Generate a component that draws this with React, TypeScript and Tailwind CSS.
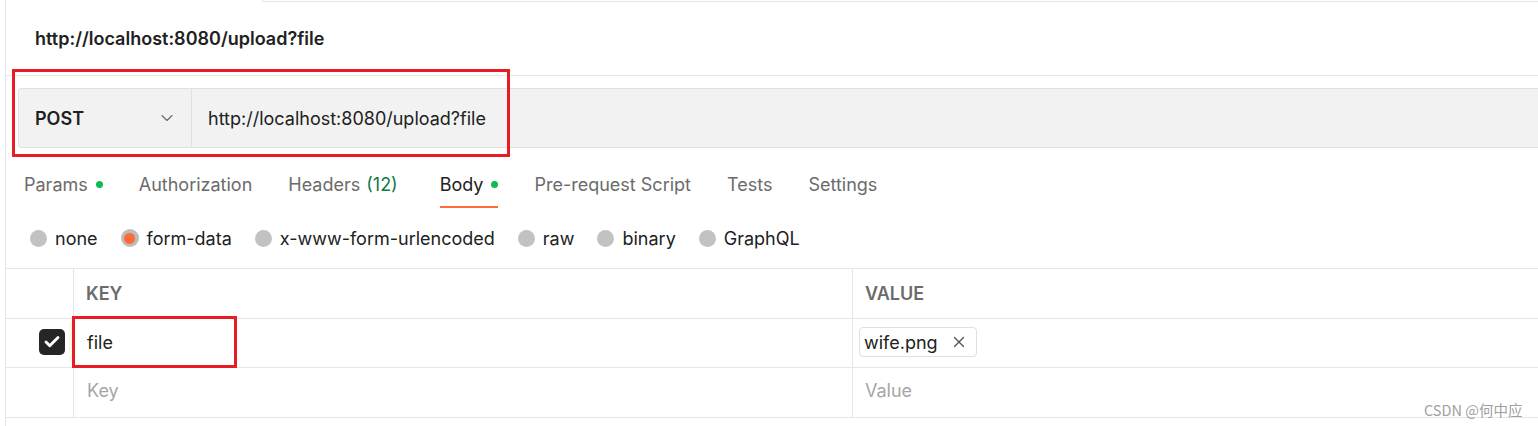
import { Check, ChevronDown, X } from "lucide-react";

const tabs = [
  { label: "Params", dot: true },
  { label: "Authorization" },
  { label: "Headers", count: "(12)" },
  { label: "Body", dot: true, active: true },
  { label: "Pre-request Script" },
  { label: "Tests" },
  { label: "Settings" },
];

const bodyTypes = ["none", "form-data", "x-www-form-urlencoded", "raw", "binary", "GraphQL"];

const App = () => {
  return (
    <div className="relative h-[426px] w-[1538px] overflow-hidden bg-white font-['Inter',sans-serif] text-[#212121]">
      <div className="ml-[5px] flex h-full flex-col border-l border-[#e6e6e6]">
        {/* tab strip edge */}
        <div className="flex h-[2px]">
          <div className="w-[256px]" />
          <div className="flex-1 border-b border-l border-[#e6e6e6]" />
        </div>

        {/* request title */}
        <div className="flex h-[74px] items-center border-b border-[#e6e6e6] pl-[29px]">
          <h1 className="text-[18px] font-semibold">http://localhost:8080/upload?file</h1>
        </div>

        {/* url bar */}
        <div className="ml-[12px] mt-[12px] flex h-[60px] rounded-l-[4px] border border-r-0 border-[#e0e0e0] bg-[#f2f2f2]">
          <div className="flex w-[173px] items-center justify-between border-r border-[#e0e0e0] pl-[16px] pr-[14px]">
            <span className="text-[18px] font-semibold">POST</span>
            <ChevronDown size={20} strokeWidth={1.4} className="text-[#6b6b6b]" />
          </div>
          <div className="flex items-center pl-[16px] text-[18px]">http://localhost:8080/upload?file</div>
        </div>

        {/* request tabs */}
        <div className="mt-[12px] flex h-[48px] gap-[36px] pl-[18px]">
          {tabs.map((t) => (
            <div
              key={t.label}
              className={
                t.active
                  ? "ml-[6px] flex items-center gap-[8px] border-b-2 border-[#ff6c37] pt-[2px] text-[18px] text-[#212121]"
                  : "flex items-center gap-[8px] border-b-2 border-transparent pt-[2px] text-[18px] text-[#6b6b6b]"
              }
            >
              <span>
                {t.label}
                {t.count && <span className="ml-[6px] text-[#0f7a45]">{t.count}</span>}
              </span>
              {t.dot && <span className="h-[7px] w-[7px] rounded-full bg-[#0cbb52]" />}
            </div>
          ))}
        </div>

        {/* body type radios */}
        <div className="mt-[10px] flex h-[40px] items-center gap-[23px] pl-[24px]">
          {bodyTypes.map((b) => (
            <label key={b} className="flex items-center gap-[8px] text-[18px]">
              {b === "form-data" ? (
                <span className="flex h-[18px] w-[18px] items-center justify-center rounded-full bg-[#bdbdbd]">
                  <span className="h-[11px] w-[11px] rounded-full bg-[#ff6c37]" />
                </span>
              ) : (
                <span className="h-[17px] w-[17px] rounded-full bg-[#c2c2c2]" />
              )}
              {b}
            </label>
          ))}
        </div>

        {/* form-data table */}
        <div className="mt-[10px] border-t border-[#e6e6e6]">
          <div className="flex h-[50px] border-b border-[#e6e6e6]">
            <div className="w-[68px] border-r border-[#e6e6e6]" />
            <div className="flex w-[779px] items-center border-r border-[#e6e6e6] pl-[12px] text-[18px] font-semibold text-[#6b6b6b]">
              KEY
            </div>
            <div className="flex flex-1 items-center pl-[12px] text-[18px] font-semibold text-[#6b6b6b]">VALUE</div>
          </div>
          <div className="flex h-[49px] border-b border-[#e6e6e6]">
            <div className="flex w-[68px] items-center justify-end border-r border-[#e6e6e6] pb-[2px]">
              <span className="flex h-[26px] w-[26px] items-center justify-center rounded-[5px] bg-[#262626]">
                <Check size={18} strokeWidth={3.8} className="text-white" />
              </span>
              <span className="my-[2px] ml-[4px] w-[4px] self-stretch bg-[#fdf8e6]" />
            </div>
            <div className="flex w-[779px] items-center border-r border-[#e6e6e6] pb-[2px] pl-[13px] text-[18px]">file</div>
            <div className="flex flex-1 items-center pb-[2px] pl-[6px]">
              <span className="flex h-[30px] items-center gap-[12px] rounded-[4px] border border-[#e0e0e0] pl-[4px] pr-[8px] text-[18px]">
                wife.png
                <X size={18} strokeWidth={1.8} className="text-[#555]" />
              </span>
            </div>
          </div>
          <div className="flex h-[50px] border-b border-[#e6e6e6]">
            <div className="w-[68px] border-r border-[#e6e6e6]" />
            <div className="flex w-[779px] items-center border-r border-[#e6e6e6] pb-[4px] pl-[13px] text-[18px] text-[#a6a6a6]">
              Key
            </div>
            <div className="flex flex-1 items-center pb-[4px] pl-[12px] text-[18px] text-[#a6a6a6]">Value</div>
          </div>
        </div>
      </div>

      {/* annotation boxes */}
      <div className="absolute left-[12px] top-[69px] h-[88px] w-[498px] border-[3px] border-[#e81c24]" />
      <div className="absolute left-[72px] top-[316px] h-[52px] w-[165px] border-[3px] border-[#e81c24]" />

      {/* watermark */}
      <div className="absolute left-[1424px] top-[402px] font-['Noto_Sans_CJK_SC',sans-serif] text-[14.5px] leading-[16px] text-[#a0a0a0]">
        CSDN @何中应
      </div>
    </div>
  );
};

export default App;
